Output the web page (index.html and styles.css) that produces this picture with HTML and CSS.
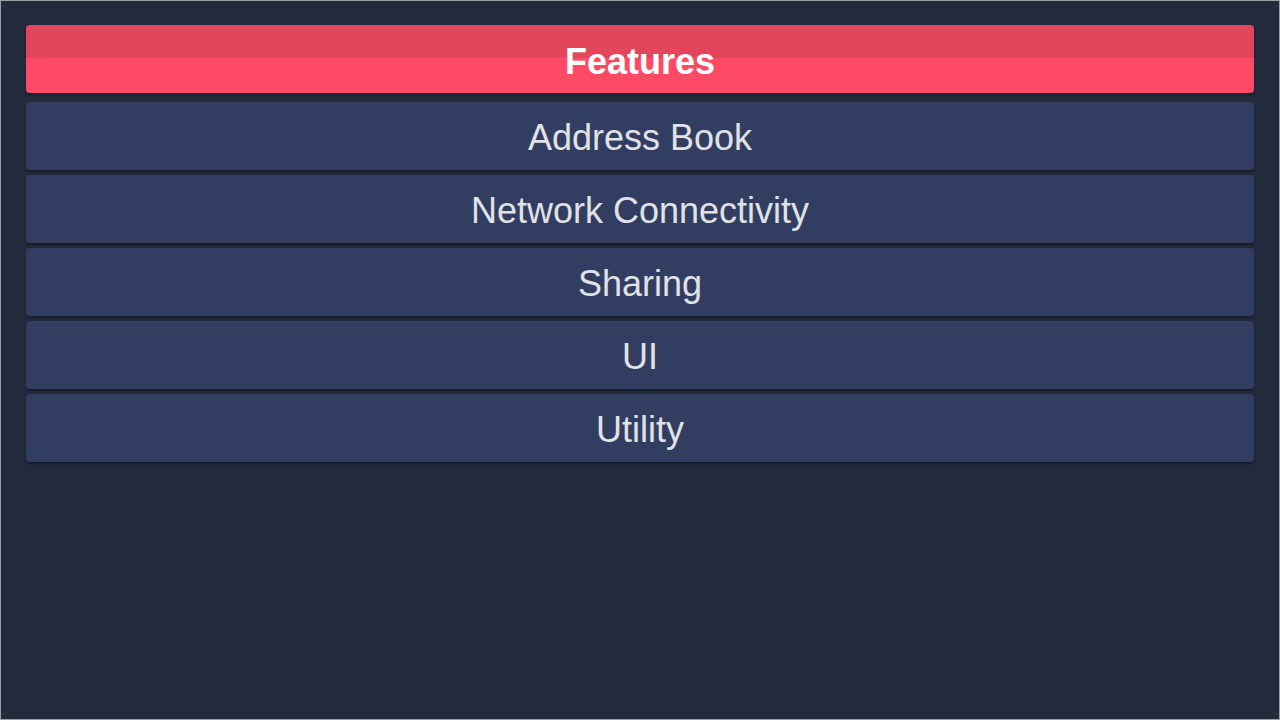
FILE: index.html
```html
<html lang="en">
<head>
    <meta charset="UTF-8">
    <meta name="viewport" content="width=device-width, initial-scale=1.0">
    <title>Features</title>
    <link rel="stylesheet" href="styles.css">
</head>
<body>
    <div class="window">
        <div class="menu">
            <div class="menu-header">Features</div>
            <div class="menu-item">Address Book</div>
            <div class="menu-item">Network Connectivity</div>
            <div class="menu-item">Sharing</div>
            <div class="menu-item">UI</div>
            <div class="menu-item">Utility</div>
        </div>
    </div>
</body>
</html>
```

FILE: styles.css
```css
html, body {
    margin: 0;
    height: 100%;
}

body {
    font-family: 'Liberation Sans', Arial, sans-serif;
    background-color: #232a3c;
}

.window {
    box-sizing: border-box;
    height: 720px;
    border: 1px solid #93a3a3;
    padding: 24px 25px;
}

.menu {
    display: flex;
    flex-direction: column;
    gap: 5px;
}

.menu-header {
    height: 68px;
    margin-bottom: 4px;
    border-radius: 4px;
    background: linear-gradient(to bottom, #e3455d 0, #e3455d 33px, #fe4a64 33px, #fe4a64 100%);
    box-shadow: 0 2px 2px rgba(0, 0, 0, 0.35);
    color: #ffffff;
    font-size: 36px;
    font-weight: bold;
    display: flex;
    align-items: center;
    justify-content: center;
    padding-top: 6px;
    box-sizing: border-box;
}

.menu-item {
    height: 68px;
    border-radius: 4px;
    background-color: #313e62;
    box-shadow: 0 2px 2px rgba(0, 0, 0, 0.35);
    color: #e1e1e6;
    font-size: 36px;
    display: flex;
    align-items: center;
    justify-content: center;
    padding-top: 4px;
    box-sizing: border-box;
}
```
